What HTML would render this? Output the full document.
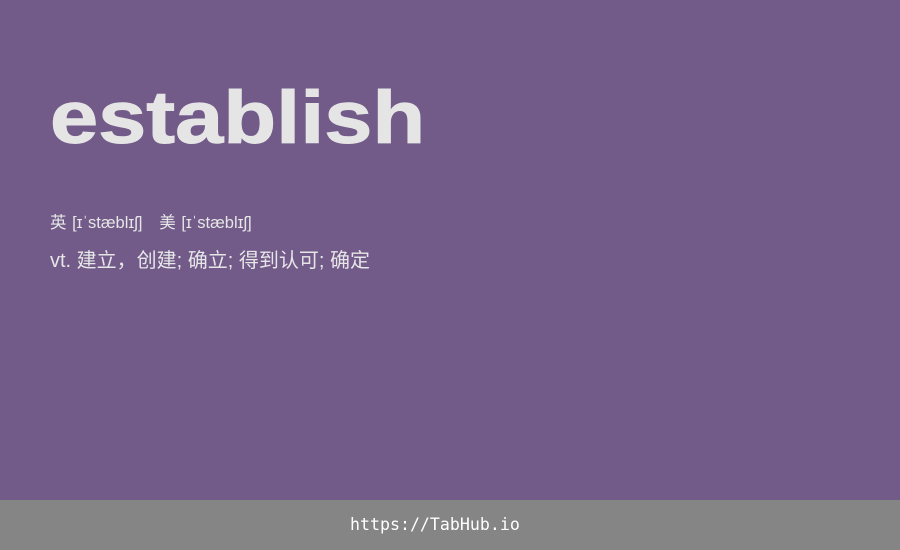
<!DOCTYPE html>
<html><head><meta charset="utf-8"><style>
html,body{margin:0;padding:0;}
body{width:900px;height:550px;background:#725a89;position:relative;overflow:hidden;font-family:"Liberation Sans","Noto Sans CJK SC",sans-serif;color:#e6e6e6;}
.w{position:absolute;left:50px;top:68px;font-size:74px;font-weight:bold;color:#e5e5e5;line-height:100px;transform:scaleX(1.17);transform-origin:0 0;-webkit-text-stroke:1px #e5e5e5;}
.p{position:absolute;left:50px;top:213px;font-size:16.5px;line-height:20px;color:#e6e6e6;word-spacing:1px;}
.d{position:absolute;left:50px;top:248px;font-size:20px;line-height:26px;color:#e6e6e6;}
.f{position:absolute;left:0;top:500px;width:900px;height:50px;background:#858585;}
.f span{position:absolute;left:350px;top:0;color:#fff;font-family:"DejaVu Sans Mono","Liberation Mono",monospace;font-size:16.6px;line-height:50px;}
</style></head><body>
<div class="w">establish</div>
<div class="p">英 [ɪˈstæblɪʃ]&nbsp;&nbsp;&nbsp;美 [ɪˈstæblɪʃ]</div>
<div class="d">vt. 建立，创建; 确立; 得到认可; 确定</div>
<div class="f"><span>https://TabHub.io</span></div>
</body></html>
